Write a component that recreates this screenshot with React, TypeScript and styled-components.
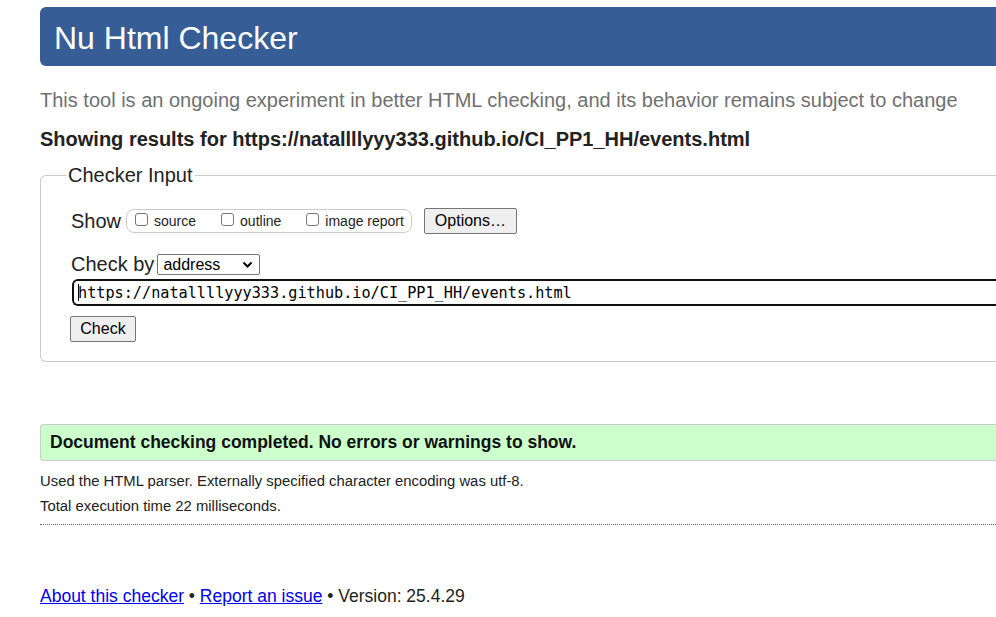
import React from "react";
import styled, { createGlobalStyle } from "styled-components";

const Global = createGlobalStyle`
  html, body { margin: 0; padding: 0; background: #fff; overflow: hidden; }
  body { font-family: "Liberation Sans", Arial, sans-serif; color: #222; }
`;

const Page = styled.div`
  width: 1200px;
  padding: 7px 0 0 40px;
`;

const Header = styled.header`
  height: 59px;
  background: #365d95;
  border-radius: 6px 0 0 6px;
  display: flex;
  align-items: center;
  padding: 2px 0 0 14px;
  box-sizing: border-box;
`;

const Title = styled.h1`
  margin: 0;
  font-size: 32px;
  font-weight: normal;
  line-height: 1;
  color: #fff;
`;

const Subtitle = styled.p`
  margin: 23px 0 0;
  font-size: 20px;
  line-height: 23px;
  color: #707070;
`;

const Results = styled.h2`
  margin: 16px 0 0;
  font-size: 20px;
  line-height: 23px;
  font-weight: bold;
  color: #222;
`;

const Fieldset = styled.fieldset`
  margin: 13px 0 0;
  padding: 11px 0 19px 30px;
  border: 1px solid #ccc;
  border-radius: 6px 0 0 6px;
  border-right: none;
`;

const Legend = styled.legend`
  margin-left: -5px;
  padding: 0 2px;
  font-size: 20px;
  line-height: 23px;
  color: #222;
`;

const Row = styled.div<{ $mt: number }>`
  display: flex;
  align-items: center;
  font-size: 20px;
  color: #222;
  margin-top: ${(p) => p.$mt}px;
`;

const Label = styled.span<{ $mr?: number }>`
  font-size: 20px;
  line-height: 23px;
  margin-right: ${(p) => p.$mr ?? 5}px;
`;

const Group = styled.span`
  display: inline-flex;
  align-items: center;
  height: 24px;
  box-sizing: border-box;
  border: 1px solid #ccc;
  border-radius: 8px;
  padding: 0 7px 0 8px;
  gap: 25px;
  margin-right: 12px;
`;

const CheckItem = styled.label`
  display: inline-flex;
  align-items: center;
  font-size: 14px;
  color: #222;
`;

const Box = styled.span`
  width: 13px;
  height: 13px;
  box-sizing: border-box;
  border: 1px solid #767676;
  border-radius: 3px;
  margin: -4px 6px 0 0;
  background: #fff;
`;

const Button = styled.button<{ $w: number }>`
  font-family: "Liberation Sans", Arial, sans-serif;
  font-size: 16px;
  width: ${(p) => p.$w}px;
  height: 26px;
  padding: 0;
  background: #efefef;
  border: 1px solid #767676;
  border-radius: 2px;
  color: #000;
`;

const SelectBox = styled.span`
  display: inline-flex;
  align-items: center;
  justify-content: space-between;
  width: 103px;
  height: 21px;
  box-sizing: border-box;
  border: 1px solid #767676;
  border-radius: 2px;
  padding: 0 6px 0 5px;
  font-size: 16px;
  color: #000;
  background: #fff;
`;

const UrlInput = styled.div`
  margin-top: 3px;
  height: 27px;
  box-sizing: border-box;
  border: 2px solid #101010;
  border-right: none;
  border-radius: 6px 0 0 6px;
  display: flex;
  align-items: center;
  padding-left: 4px;
  font-family: "DejaVu Sans Mono", "Liberation Mono", monospace;
  font-size: 15.2px;
  color: #000;
  margin-left: 1px;
`;

const Caret = styled.span`
  display: inline-block;
  width: 1px;
  height: 17px;
  background: #000;
  margin-right: -1px;
`;

const Success = styled.div`
  margin-top: 62px;
  height: 37px;
  box-sizing: border-box;
  background: #ccffcc;
  border: 1px solid #ccc;
  border-right: none;
  border-radius: 4px 0 0 4px;
  display: flex;
  align-items: center;
  padding-left: 9px;
  font-size: 17.5px;
  font-weight: bold;
  color: #111;
`;

const Info = styled.p<{ $mt: number }>`
  margin: ${(p) => p.$mt}px 0 0;
  font-size: 14.85px;
  line-height: 18px;
  color: #222;
`;

const Divider = styled.hr`
  margin: 9px 0 0;
  border: none;
  border-top: 1px dotted #666;
  height: 0;
`;

const Footer = styled.p`
  margin: 61px 0 0;
  font-size: 17.5px;
  line-height: 21px;
  color: #222;
`;

const Link = styled.a`
  color: #0000ee;
  text-decoration: underline;
`;

const Chevron = () => (
  <svg width="11" height="8" viewBox="0 0 11 8">
    <path d="M1.5 1.5 L5.5 5.5 L9.5 1.5" fill="none" stroke="#000" strokeWidth="2" />
  </svg>
);

export default function App() {
  return (
    <>
      <Global />
      <Page>
        <Header>
          <Title>Nu Html Checker</Title>
        </Header>
        <Subtitle>
          This tool is an ongoing experiment in better HTML checking, and its behavior remains subject to change
        </Subtitle>
        <Results>Showing results for https://natallllyyy333.github.io/CI_PP1_HH/events.html</Results>
        <Fieldset>
          <Legend>Checker Input</Legend>
          <Row $mt={10}>
            <Label>Show</Label>
            <Group>
              <CheckItem>
                <Box />
                source
              </CheckItem>
              <CheckItem>
                <Box />
                outline
              </CheckItem>
              <CheckItem>
                <Box />
                image report
              </CheckItem>
            </Group>
            <Button $w={93}>Options…</Button>
          </Row>
          <Row $mt={19}>
            <Label $mr={3}>Check by</Label>
            <SelectBox>
              address
              <Chevron />
            </SelectBox>
          </Row>
          <UrlInput>
            <Caret />
            https://natallllyyy333.github.io/CI_PP1_HH/events.html
          </UrlInput>
          <Row $mt={10}>
            <Button $w={66} style={{ marginLeft: -1 }}>Check</Button>
          </Row>
        </Fieldset>
        <Success>Document checking completed. No errors or warnings to show.</Success>
        <Info $mt={11}>Used the HTML parser. Externally specified character encoding was utf-8.</Info>
        <Info $mt={7}>Total execution time 22 milliseconds.</Info>
        <Divider />
        <Footer>
          <Link href="#">About this checker</Link> • <Link href="#">Report an issue</Link> • Version: 25.4.29
        </Footer>
      </Page>
    </>
  );
}
